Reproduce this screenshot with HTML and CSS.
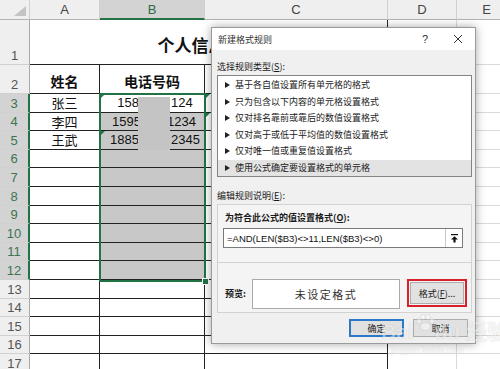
FILE: index.html
```html
<html lang="zh-CN">
<head>
    <meta charset="UTF-8">
    <title>新建格式规则</title>
    <link rel="stylesheet" href="styles.css">
</head>
<body>
<div class="screen">
    <div class="sheet">
        <!-- шапка столбцов -->
        <div class="corner"><svg width="12" height="10" viewBox="0 0 12 10"><polygon points="12,0 12,10 0,10" fill="#c4c4c4"/></svg></div>
        <div class="hd">A</div>
        <div class="hd on">B</div>
        <div class="hd">C</div>
        <div class="hd">D</div>
        <div class="hd">E</div>

        <div class="rh">1</div>
        <div class="c t title">个人信息登记</div>
        <div class="c"></div>
        <div class="c"></div>

        <div class="rh">2</div>
        <div class="c t head">姓名</div>
        <div class="c t head">电话号码</div>
        <div class="c t head"></div>
        <div class="c"></div>
        <div class="c"></div>

        <div class="rh on">3</div>
        <div class="c t name">张三</div>
        <div class="c t num flag"><span class="l">158</span><span class="gap"></span><span class="r">124</span></div>
        <div class="c t flag"></div>
        <div class="c"></div>
        <div class="c"></div>

        <div class="rh on">4</div>
        <div class="c t name">李四</div>
        <div class="c t s num"><span class="l wide">1595</span><span class="gap"></span><span class="r tuck">1234</span></div>
        <div class="c t flag"></div>
        <div class="c"></div>
        <div class="c"></div>

        <div class="rh on">5</div>
        <div class="c t name">王武</div>
        <div class="c t s num flag"><span class="l">1885</span><span class="gap"></span><span class="r">2345</span></div>
        <div class="c t"></div>
        <div class="c"></div>
        <div class="c"></div>

        <div class="rh on">6</div>
        <div class="c t"></div><div class="c t s"></div><div class="c t"></div><div class="c"></div><div class="c"></div>
        <div class="rh on">7</div>
        <div class="c t"></div><div class="c t s"></div><div class="c t"></div><div class="c"></div><div class="c"></div>
        <div class="rh on">8</div>
        <div class="c t"></div><div class="c t s"></div><div class="c t"></div><div class="c"></div><div class="c"></div>
        <div class="rh on">9</div>
        <div class="c t"></div><div class="c t s"></div><div class="c t"></div><div class="c"></div><div class="c"></div>
        <div class="rh on">10</div>
        <div class="c t"></div><div class="c t s"></div><div class="c t"></div><div class="c"></div><div class="c"></div>
        <div class="rh on">11</div>
        <div class="c t"></div><div class="c t s"></div><div class="c t"></div><div class="c"></div><div class="c"></div>
        <div class="rh on">12</div>
        <div class="c t"></div><div class="c t s"></div><div class="c t"></div><div class="c"></div><div class="c"></div>
        <div class="rh">13</div>
        <div class="c t"></div><div class="c t"></div><div class="c t"></div><div class="c"></div><div class="c"></div>
        <div class="rh">14</div>
        <div class="c t"></div><div class="c t"></div><div class="c t"></div><div class="c"></div><div class="c"></div>
        <div class="rh">15</div>
        <div class="c t"></div><div class="c t"></div><div class="c t"></div><div class="c"></div><div class="c"></div>
        <div class="rh">16</div>
        <div class="c t"></div><div class="c t"></div><div class="c t"></div><div class="c"></div><div class="c"></div>
        <div class="rh">17</div>
        <div class="c t"></div><div class="c t"></div><div class="c t"></div><div class="c"></div><div class="c"></div>

        <!-- закрашенная часть номеров и рамка выделения -->
        <div class="mask"></div>
        <div class="selection"><span class="handle"></span></div>
    </div>

    <div class="dialog">
        <div class="dlg-title">
            <span>新建格式规则</span>
            <span class="dlg-ctrls">
                <span class="help">?</span>
                <span class="close"><svg width="10" height="10" viewBox="0 0 10 10"><path d="M1 1L9 9M9 1L1 9" stroke="#333" stroke-width="1"/></svg></span>
            </span>
        </div>
        <div class="dlg-body">
            <div class="lbl first">选择规则类型(<u>S</u>):</div>
            <ul class="rule-list">
                <li>基于各自值设置所有单元格的格式</li>
                <li>只为包含以下内容的单元格设置格式</li>
                <li>仅对排名靠前或靠后的数值设置格式</li>
                <li>仅对高于或低于平均值的数值设置格式</li>
                <li>仅对唯一值或重复值设置格式</li>
                <li class="active">使用公式确定要设置格式的单元格</li>
            </ul>
            <div class="lbl second">编辑规则说明(<u>E</u>):</div>
            <div class="desc">
                <div class="desc-top">
                    <div class="lbl bold">为符合此公式的值设置格式(<u>O</u>):</div>
                    <div class="formula">
                        <span class="formula-text">=AND(LEN($B3)&lt;&gt;11,LEN($B3)&lt;&gt;0)</span>
                        <span class="ref-btn"><svg width="7" height="9" viewBox="0 0 7 9"><rect x="0" y="0" width="7" height="1.2" fill="#111"/><polygon points="3.5,2.2 0,5.6 2.4,5.6 2.4,8.6 4.6,8.6 4.6,5.6 7,5.6" fill="#111"/></svg></span>
                    </div>
                </div>
                <div class="desc-bottom">
                    <span class="preview-lbl">预览:</span>
                    <div class="preview">未设定格式</div>
                    <div class="hl"><button class="btn fmt">格式(<u>F</u>)...</button></div>
                </div>
            </div>
            <div class="dlg-btns">
                <button class="btn ok">确定</button>
                <button class="btn cancel">取消</button>
            </div>
        </div>
    </div>

    <div class="watermark">
        <div class="wm-logo">Bai<svg width="20" height="18" viewBox="0 0 20 18"><ellipse cx="4" cy="7" rx="2.2" ry="2.8" fill="#fff" stroke="#bbb" stroke-width=".6"/><ellipse cx="8" cy="3" rx="2.2" ry="2.8" fill="#fff" stroke="#bbb" stroke-width=".6"/><ellipse cx="13" cy="3" rx="2.2" ry="2.8" fill="#fff" stroke="#bbb" stroke-width=".6"/><ellipse cx="17" cy="7" rx="2.2" ry="2.8" fill="#fff" stroke="#bbb" stroke-width=".6"/><ellipse cx="10.5" cy="12.5" rx="5" ry="4" fill="#fff" stroke="#bbb" stroke-width=".6"/></svg>du 经验</div>
        <div class="wm-url">jingyan.baidu.com</div>
    </div>
</div>
</body>
</html>
```

FILE: styles.css
```css
html, body {
    margin: 0;
    padding: 0;
}
body {
    width: 500px;
    height: 369px;
    overflow: hidden;
    background-color: white;
    font-family: "Liberation Sans", "Noto Sans CJK SC", sans-serif;
}
.screen {
    position: relative;
    width: 500px;
    height: 369px;
    overflow: hidden;
}

/* лист */
.sheet {
    position: relative;
    display: grid;
    grid-template-columns: 30px 70px 105px 183px 69px 60px;
    grid-template-rows: 20px 45px 29px repeat(15, 18.6px);
}
.corner {
    background-color: #efefef;
    border-right: 1px solid #d0d0d0;
    border-bottom: 1px solid #b4b4b4;
    box-sizing: border-box;
    display: flex;
    align-items: flex-end;
    justify-content: flex-end;
    padding: 0 3px 3px 0;
}
.hd {
    background-color: #efefef;
    border-right: 1px solid #d0d0d0;
    border-bottom: 1px solid #b4b4b4;
    box-sizing: border-box;
    color: #444;
    font-size: 13px;
    display: flex;
    align-items: center;
    justify-content: center;
}
.hd.on {
    background-color: #d3d3d3;
    color: #2d6a47;
    border-bottom: 2px solid #217346;
}
.rh {
    background-color: #efefef;
    border-right: 1px solid #a8a8a8;
    border-bottom: 1px solid #d0d0d0;
    box-sizing: border-box;
    color: #555;
    font-size: 13px;
    line-height: 17px;
    display: flex;
    align-items: flex-end;
    justify-content: center;
}
.rh.on {
    background-color: #d3d3d3;
    color: #3b7453;
    border-right: 2px solid #217346;
}
.c {
    position: relative;
    border-right: 1px solid #dadada;
    border-bottom: 1px solid #dadada;
    box-sizing: border-box;
    display: flex;
    align-items: center;
    justify-content: center;
    color: #111;
    font-size: 13px;
}
.c.t {
    border-color: #222;
}
.c.s {
    background-color: #c8c8c8;
}
.title {
    grid-column: 2 / 5;
    font-family: "Noto Sans CJK SC", sans-serif;
    font-size: 17px;
    font-weight: bold;
    padding-top: 5px;
}
.head {
    font-family: "Noto Sans CJK SC", sans-serif;
    font-size: 14px;
    font-weight: bold;
    padding-top: 3px;
}
.name {
    font-family: "Noto Sans CJK SC", sans-serif;
    font-size: 13px;
}
.num {
    justify-content: flex-start;
}
.num .l {
    width: 39px;
    text-align: right;
    white-space: nowrap;
}
.num .l.wide {
    width: 41px;
}
.num .gap {
    width: 32px;
}
.num .r {
    white-space: nowrap;
}
.num .r.tuck {
    margin-left: -6px;
}
.flag::before {
    content: "";
    position: absolute;
    left: 0;
    top: 0;
    border-top: 5px solid #1f7a47;
    border-right: 5px solid transparent;
}
.mask {
    position: absolute;
    left: 138px;
    top: 97px;
    width: 32px;
    height: 53px;
    background-color: #c4c4c4;
}
.selection {
    position: absolute;
    left: 99px;
    top: 93px;
    width: 107px;
    height: 189px;
    border: 2px solid #217346;
    box-sizing: border-box;
}
.handle {
    position: absolute;
    right: -5px;
    bottom: -5px;
    width: 5px;
    height: 5px;
    background-color: #217346;
    border: 1px solid white;
}

/* диалог */
.dialog {
    position: absolute;
    left: 211px;
    top: 27px;
    width: 265px;
    height: 317px;
    box-sizing: border-box;
    border: 1px solid #9a9a9a;
    background-color: #f0f0f0;
    box-shadow: 0 0 9px rgba(0, 0, 0, 0.35);
    font-family: "Noto Sans CJK SC", sans-serif;
    font-size: 9px;
    color: #1a1a1a;
}
.dlg-title {
    height: 22px;
    background-color: white;
    display: flex;
    align-items: center;
    justify-content: space-between;
    padding-left: 6px;
    color: #333;
}
.dlg-ctrls {
    display: flex;
    align-items: center;
    height: 100%;
}
.help {
    width: 16px;
    text-align: center;
    font-family: "Liberation Sans", sans-serif;
    font-size: 11px;
    margin-right: 8px;
}
.close {
    width: 34px;
    height: 100%;
    display: flex;
    align-items: center;
    justify-content: center;
}
.dlg-body {
    padding: 0 3px 0 5px;
}
.lbl {
    height: 13px;
    line-height: 13px;
    white-space: nowrap;
}
.lbl.first {
    margin-top: 10px;
}
.lbl.second {
    margin-top: 12px;
}
.bold {
    font-weight: bold;
}
.rule-list {
    list-style: none;
    margin: 2px 0 0;
    padding: 1px 0 0;
    height: 102px;
    box-sizing: border-box;
    background-color: white;
    border: 1px solid #848484;
}
.rule-list li {
    height: 16.5px;
    line-height: 16.5px;
    padding-left: 7px;
    display: flex;
    align-items: center;
    white-space: nowrap;
}
.rule-list li::before {
    content: "";
    border-left: 5px solid #222;
    border-top: 3px solid transparent;
    border-bottom: 3px solid transparent;
    margin-right: 5px;
}
.rule-list li.active {
    background-color: #e3e3e3;
}
.desc {
    margin-top: 2px;
    height: 109px;
    box-sizing: border-box;
    border: 1px solid #d2d2d2;
    background-color: #f4f4f4;
}
.desc-top {
    padding: 6px 8px 14px 5px;
    border-bottom: 1px solid #d2d2d2;
}
.desc-top .lbl {
    margin-left: 2px;
    margin-bottom: 4px;
}
.formula {
    height: 20px;
    box-sizing: border-box;
    border: 1px solid #7a7a7a;
    background-color: white;
    display: flex;
    align-items: center;
}
.formula-text {
    flex: 1;
    padding-left: 3px;
    font-family: "Liberation Sans", sans-serif;
    font-size: 9.5px;
    color: #111;
}
.ref-btn {
    width: 16px;
    height: 100%;
    border-left: 1px solid #c8c8c8;
    display: flex;
    align-items: center;
    justify-content: center;
}
.desc-bottom {
    display: flex;
    align-items: flex-start;
    padding: 16px 0 0 7px;
}
.preview-lbl {
    width: 27px;
    font-weight: bold;
    line-height: 30px;
}
.preview {
    width: 148px;
    height: 30px;
    box-sizing: border-box;
    border: 1px solid #a9a9a9;
    background-color: white;
    display: flex;
    align-items: center;
    justify-content: center;
    font-size: 11px;
    letter-spacing: 1.5px;
    color: #333;
}
.hl {
    margin-left: 7px;
    width: 60px;
    height: 28px;
    box-sizing: border-box;
    border: 2px solid #d8202c;
    padding: 1px;
    display: flex;
}
.btn {
    font-family: "Noto Sans CJK SC", sans-serif;
    font-size: 9px;
    color: #1a1a1a;
    background-color: #e1e1e1;
    border: 1px solid #adadad;
    padding: 0;
    margin: 0;
}
.fmt {
    flex: 1;
}
.dlg-btns {
    margin-top: 6px;
    display: flex;
    justify-content: flex-end;
    padding-right: 4px;
}
.dlg-btns .btn {
    height: 18px;
    width: 55px;
}
.ok {
    width: 54px;
    border-color: #2b78c9;
    box-shadow: inset 0 0 0 1px #2b78c9;
    margin-right: 9px;
}

/* водяной знак */
.watermark {
    position: absolute;
    left: 381px;
    top: 320px;
    color: rgba(255, 255, 255, 0.8);
    text-shadow: 0 0 1px rgba(0, 0, 0, 0.3);
    pointer-events: none;
}
.wm-logo {
    display: flex;
    align-items: flex-start;
    font-family: "Liberation Sans", "Noto Sans CJK SC", sans-serif;
    font-size: 21px;
    font-weight: bold;
    line-height: 24px;
    white-space: nowrap;
    opacity: 0.6;
}
.wm-logo svg {
    margin: -6px 0 0 1px;
    opacity: 0.8;
}
.wm-url {
    font-size: 9px;
    margin: 1px 0 0 10px;
    opacity: 0.5;
}
```
